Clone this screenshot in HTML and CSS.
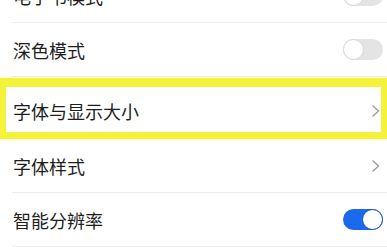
FILE: index.html
```html
<!DOCTYPE html>
<html lang="zh-CN">
<head>
    <meta charset="UTF-8">
    <meta name="viewport" content="width=device-width, initial-scale=1.0">
    <title>显示设置</title>
    <link rel="stylesheet" href="styles.css">
</head>
<body>

<ul class="settings">
    <li class="row">
        <span class="label">电子书模式</span>
        <span class="switch"></span>
    </li>
    <li class="row">
        <span class="label">深色模式</span>
        <span class="switch"></span>
    </li>
    <li class="row highlight">
        <span class="label">字体与显示大小</span>
        <svg class="chevron" width="9" height="14" viewBox="0 0 9 14">
            <polyline points="1.5,1.5 7.5,7 1.5,12.5" fill="none" stroke="#9a9a9a" stroke-width="1.3"/>
        </svg>
    </li>
    <li class="row">
        <span class="label">字体样式</span>
        <svg class="chevron" width="9" height="14" viewBox="0 0 9 14">
            <polyline points="1.5,1.5 7.5,7 1.5,12.5" fill="none" stroke="#9a9a9a" stroke-width="1.3"/>
        </svg>
    </li>
    <li class="row">
        <span class="label">智能分辨率</span>
        <span class="switch on"></span>
    </li>
</ul>

</body>
</html>
```

FILE: styles.css
```css
body {
    margin: 0;
    background: #fff;
    font-family: "Noto Sans CJK SC", "Noto Sans", sans-serif;
    overflow: hidden;
}
.settings {
    list-style: none;
    margin: -31px 0 0 0;
    padding: 0;
}
.row {
    display: flex;
    align-items: center;
    justify-content: space-between;
    box-sizing: border-box;
    height: 54px;
    margin-left: 12px;
    padding: 0 4px 0 1px;
    border-bottom: 1px solid #ededed;
}
.label {
    font-size: 18px;
    color: #1e1e1e;
}
.chevron {
    margin-right: 3px;
}
.highlight {
    position: relative;
    height: 62px;
    padding-top: 6px;
}
.highlight::before {
    content: "";
    position: absolute;
    top: 1px;
    bottom: -1px;
    left: -12px;
    right: 0;
    border-style: solid;
    border-color: #f5f23c;
    border-width: 9px 6px 7px 6px;
    box-shadow: 0 0 3px rgba(245, 242, 60, 0.6);
}
.switch {
    position: relative;
    width: 40px;
    height: 21px;
    border-radius: 11px;
    background: #e4e4e4;
}
.switch::after {
    content: "";
    position: absolute;
    top: 0;
    left: 0;
    width: 19px;
    height: 19px;
    border-radius: 50%;
    background: #fff;
    border: 1px solid #d6d6d6;
}
.switch.on {
    background: #1b69ec;
}
.switch.on::after {
    left: auto;
    right: 0;
    border-color: #1552bd;
}
```
